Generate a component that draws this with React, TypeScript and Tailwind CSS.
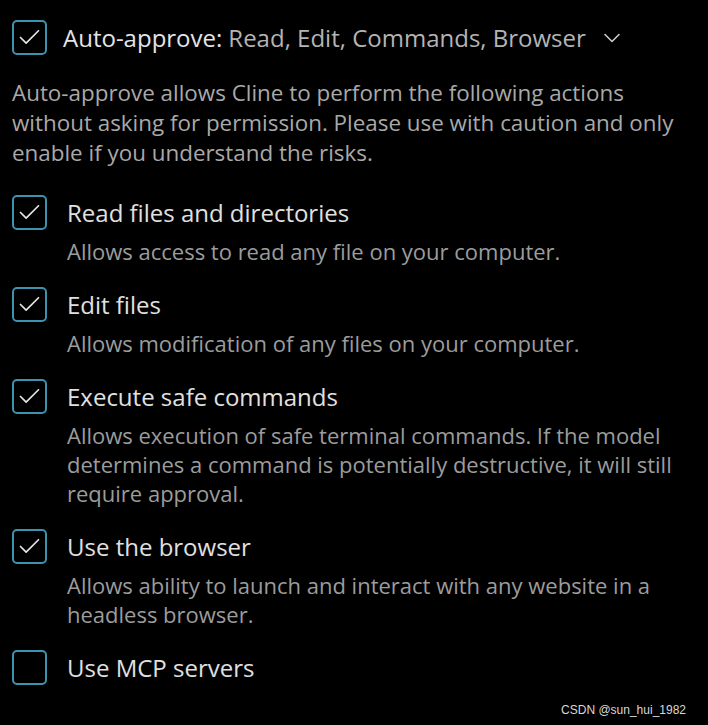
import { Check, ChevronDown } from 'lucide-react'

const ACTIONS = [
  { title: 'Read files and directories', desc: 'Allows access to read any file on your computer.', checked: true },
  { title: 'Edit files', desc: 'Allows modification of any files on your computer.', checked: true },
  {
    title: 'Execute safe commands',
    desc: 'Allows execution of safe terminal commands. If the model determines a command is potentially destructive, it will still require approval.',
    checked: true,
  },
  { title: 'Use the browser', desc: 'Allows ability to launch and interact with any website in a headless browser.', checked: true },
  { title: 'Use MCP servers', desc: '', checked: false },
]

function Box({ checked }: { checked: boolean }) {
  return (
    <div className="w-[35px] h-[35px] shrink-0 rounded-[5px] border-2 border-[#3c93ae] flex items-center justify-center">
      {checked && <Check className="w-[27px] h-[27px] text-[#e6e6e6]" strokeWidth={1.5} />}
    </div>
  )
}

export default function App() {
  return (
    <div className="relative w-[708px] h-[725px] bg-black overflow-hidden font-['Open_Sans',sans-serif]">
      <div className="pl-3 pr-4 pt-5">
        <div className="flex items-center">
          <Box checked />
          <div className="ml-[16px] text-[24px] leading-[30px] flex items-center whitespace-nowrap">
            <span className="text-[#e4e4e4]">Auto-approve:</span>
            <span className="ml-[6px] text-[#b4b4b4]">Read, Edit, Commands, Browser</span>
            <ChevronDown className="ml-[12px] w-[28px] h-[28px] text-[#c8c8c8]" strokeWidth={1.4} />
          </div>
        </div>

        <p className="mt-[23px] text-[22.4px] leading-[30px] text-[#a9a9a9] w-[680px]">
          Auto-approve allows Cline to perform the following actions without asking for permission. Please use with caution and only enable if you understand the risks.
        </p>

        <div className="mt-[27px] flex flex-col gap-[21px]">
          {ACTIONS.map((a) => (
            <div key={a.title}>
              <div className="flex items-center">
                <Box checked={a.checked} />
                <span className="ml-[20px] text-[24px] leading-[30px] text-[#e0e0e0]">{a.title}</span>
              </div>
              {a.desc && (
                <p className="mt-[7px] pl-[55px] text-[22px] leading-[29px] text-[#9c9c9c] w-[680px]">{a.desc}</p>
              )}
            </div>
          ))}
        </div>
      </div>

      <div className="absolute right-[22px] bottom-[6px] text-[12px] text-[#d8d8d8] font-['Liberation_Sans',sans-serif]">
        CSDN @sun_hui_1982
      </div>
    </div>
  )
}
